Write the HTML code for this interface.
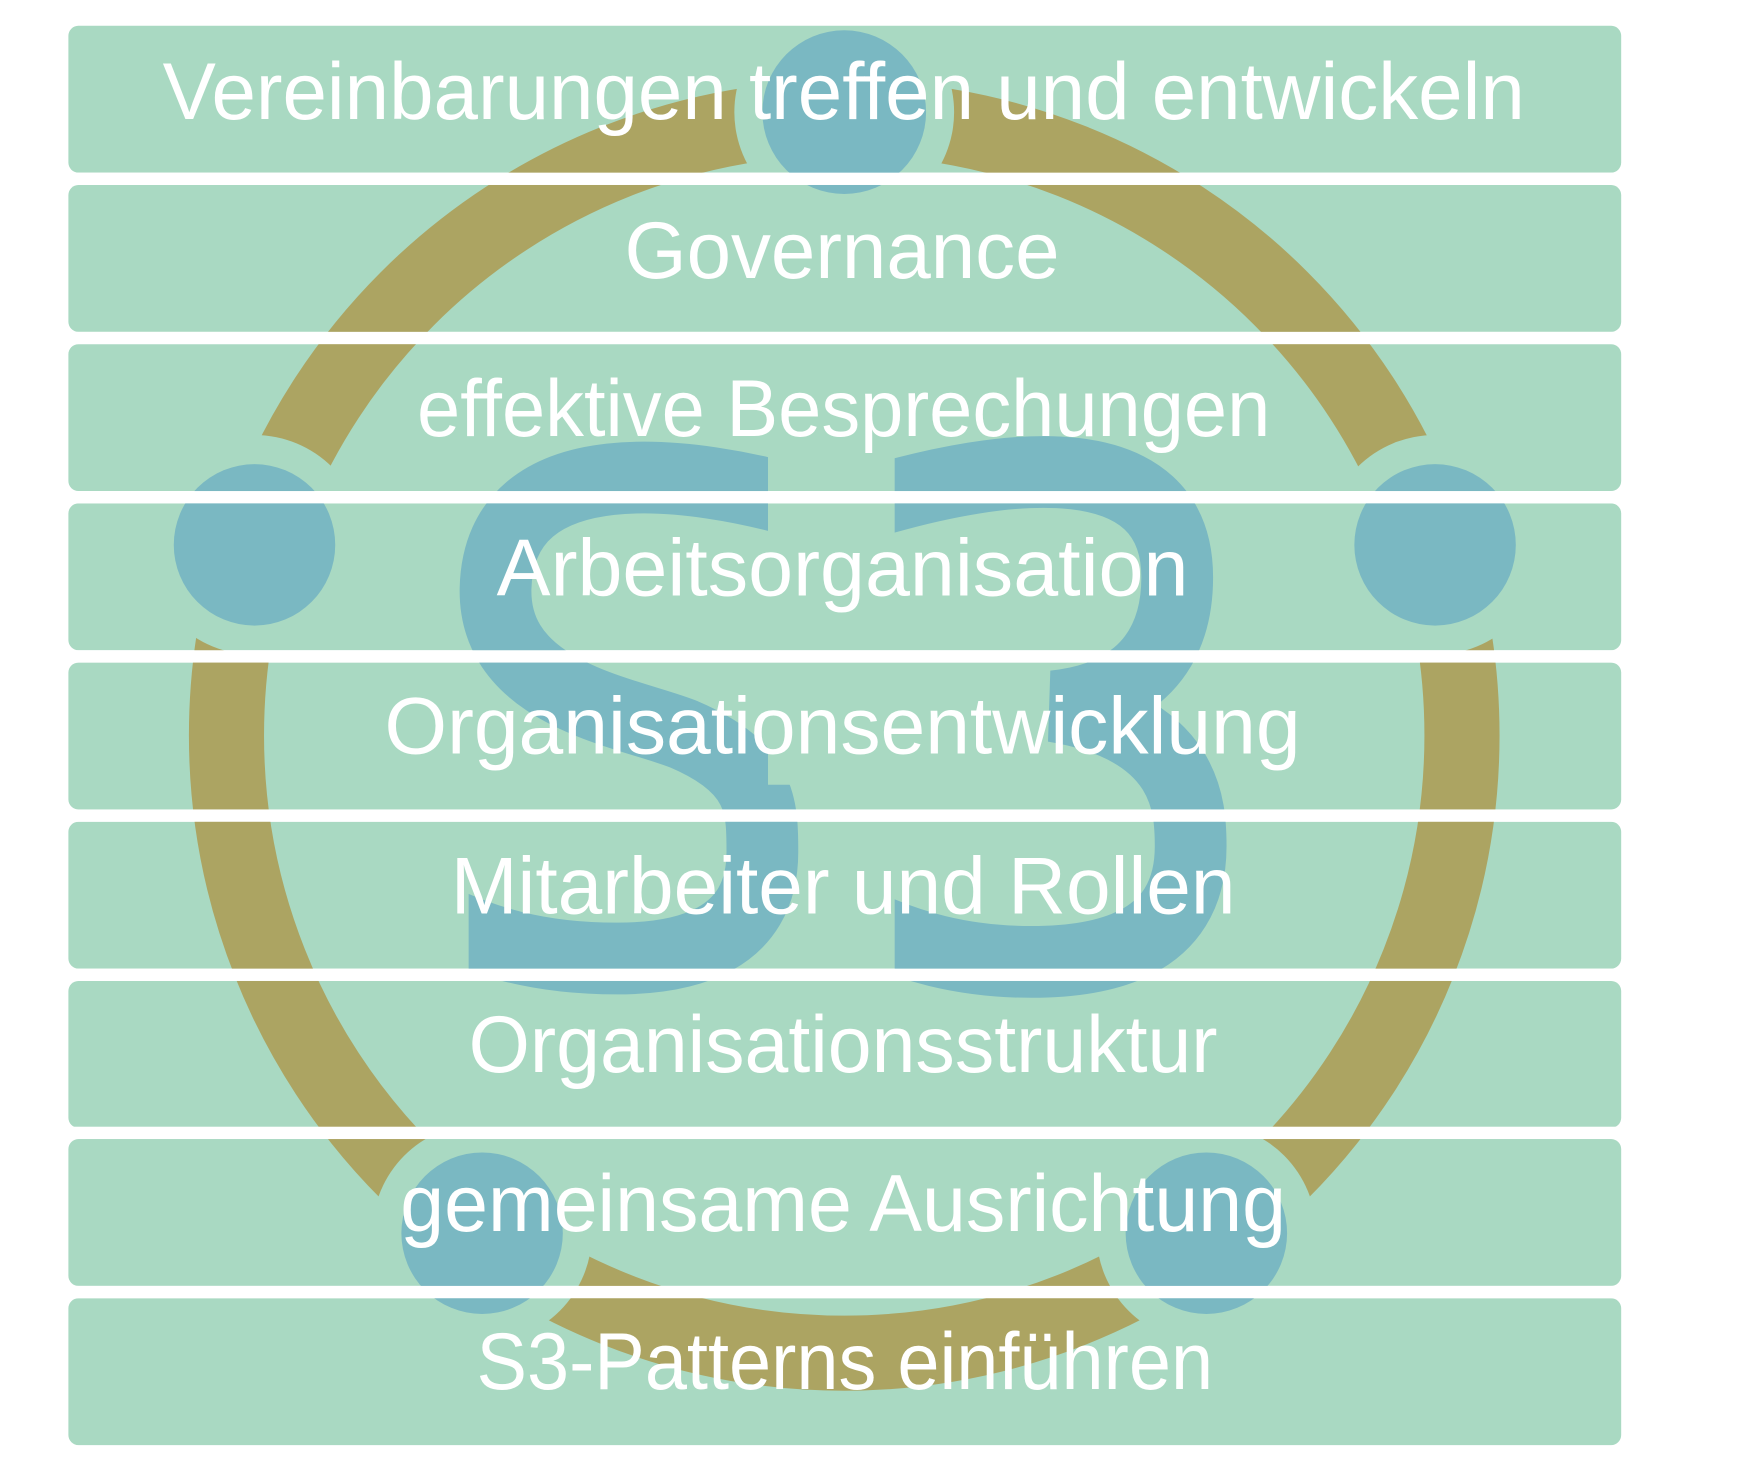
<!DOCTYPE html>
<html><head><meta charset="utf-8"><style>html,body{margin:0;padding:0;background:#fff;}svg{display:block}</style></head>
<body>
<svg width="1749" height="1458" viewBox="0 0 1560 1300.5" preserveAspectRatio="none" xmlns="http://www.w3.org/2000/svg">
<defs>
<mask id="m"><rect width="1560" height="1301" fill="#fff"/>
<circle cx="753" cy="100" r="98" fill="#000"/><circle cx="227" cy="486" r="98" fill="#000"/><circle cx="1280" cy="486" r="98" fill="#000"/><circle cx="430" cy="1100" r="98" fill="#000"/><circle cx="1076" cy="1100" r="98" fill="#000"/>
</mask>
<clipPath id="c"><rect x="400" y="0" width="285" height="700"/><rect x="418" y="700" width="320" height="600"/><rect x="798" y="0" width="320" height="1300"/></clipPath>
</defs>
<g fill="#a9d9c2">
<rect x="61" y="23" width="1385" height="131" rx="9"/>
<rect x="61" y="165" width="1385" height="131" rx="9"/>
<rect x="61" y="307" width="1385" height="131" rx="9"/>
<rect x="61" y="449" width="1385" height="131" rx="9"/>
<rect x="61" y="591" width="1385" height="131" rx="9"/>
<rect x="61" y="733" width="1385" height="131" rx="9"/>
<rect x="61" y="875" width="1385" height="131" rx="9"/>
<rect x="61" y="1016" width="1385" height="131" rx="9"/>
<rect x="61" y="1158" width="1385" height="131" rx="9"/>
</g>
<circle cx="753" cy="656" r="551" fill="none" stroke="#aca462" stroke-width="67" mask="url(#m)"/>
<g fill="none" stroke="#7ab8c2" stroke-width="64" clip-path="url(#c)">
<path d="M720 450 C620 420 445 395 442 525 C440 620 560 635 610 655 C680 685 680 720 680 760 C680 840 610 855 550 855 C480 855 430 840 380 815"/>
<path d="M770 450 C900 410 1050 395 1050 515 C1050 600 990 625 940 630 C1060 650 1062 720 1062 755 C1062 845 980 858 920 858 C860 858 810 845 760 820"/>
</g>
<g fill="#7ab8c2">
<circle cx="753" cy="100" r="73"/><circle cx="227" cy="486" r="72"/><circle cx="1280" cy="486" r="72"/><circle cx="430" cy="1100" r="72"/><circle cx="1076" cy="1100" r="72"/>
</g>
<g fill="#fff">
<rect x="0" y="154" width="1560" height="11"/><rect x="0" y="296" width="1560" height="11"/><rect x="0" y="438" width="1560" height="11"/><rect x="0" y="580" width="1560" height="11"/><rect x="0" y="722" width="1560" height="11"/><rect x="0" y="864" width="1560" height="11"/><rect x="0" y="1005" width="1560" height="11"/><rect x="0" y="1147" width="1560" height="11"/>
</g>
<g fill="#fff" font-family="Liberation Sans, sans-serif" font-size="72">
<text x="145" y="106" textLength="1215" lengthAdjust="spacingAndGlyphs">Vereinbarungen treffen und entwickeln</text>
<text x="557" y="248" textLength="388" lengthAdjust="spacingAndGlyphs">Governance</text>
<text x="372" y="389" textLength="761" lengthAdjust="spacingAndGlyphs">effektive Besprechungen</text>
<text x="443" y="531" textLength="617" lengthAdjust="spacingAndGlyphs">Arbeitsorganisation</text>
<text x="343" y="672" textLength="817" lengthAdjust="spacingAndGlyphs">Organisationsentwicklung</text>
<text x="402" y="815" textLength="700" lengthAdjust="spacingAndGlyphs">Mitarbeiter und Rollen</text>
<text x="418" y="956" textLength="668" lengthAdjust="spacingAndGlyphs">Organisationsstruktur</text>
<text x="357" y="1098" textLength="790" lengthAdjust="spacingAndGlyphs">gemeinsame Ausrichtung</text>
<text x="425" y="1239" textLength="657" lengthAdjust="spacingAndGlyphs">S3-Patterns einführen</text>
</g>
</svg>
</body></html>
